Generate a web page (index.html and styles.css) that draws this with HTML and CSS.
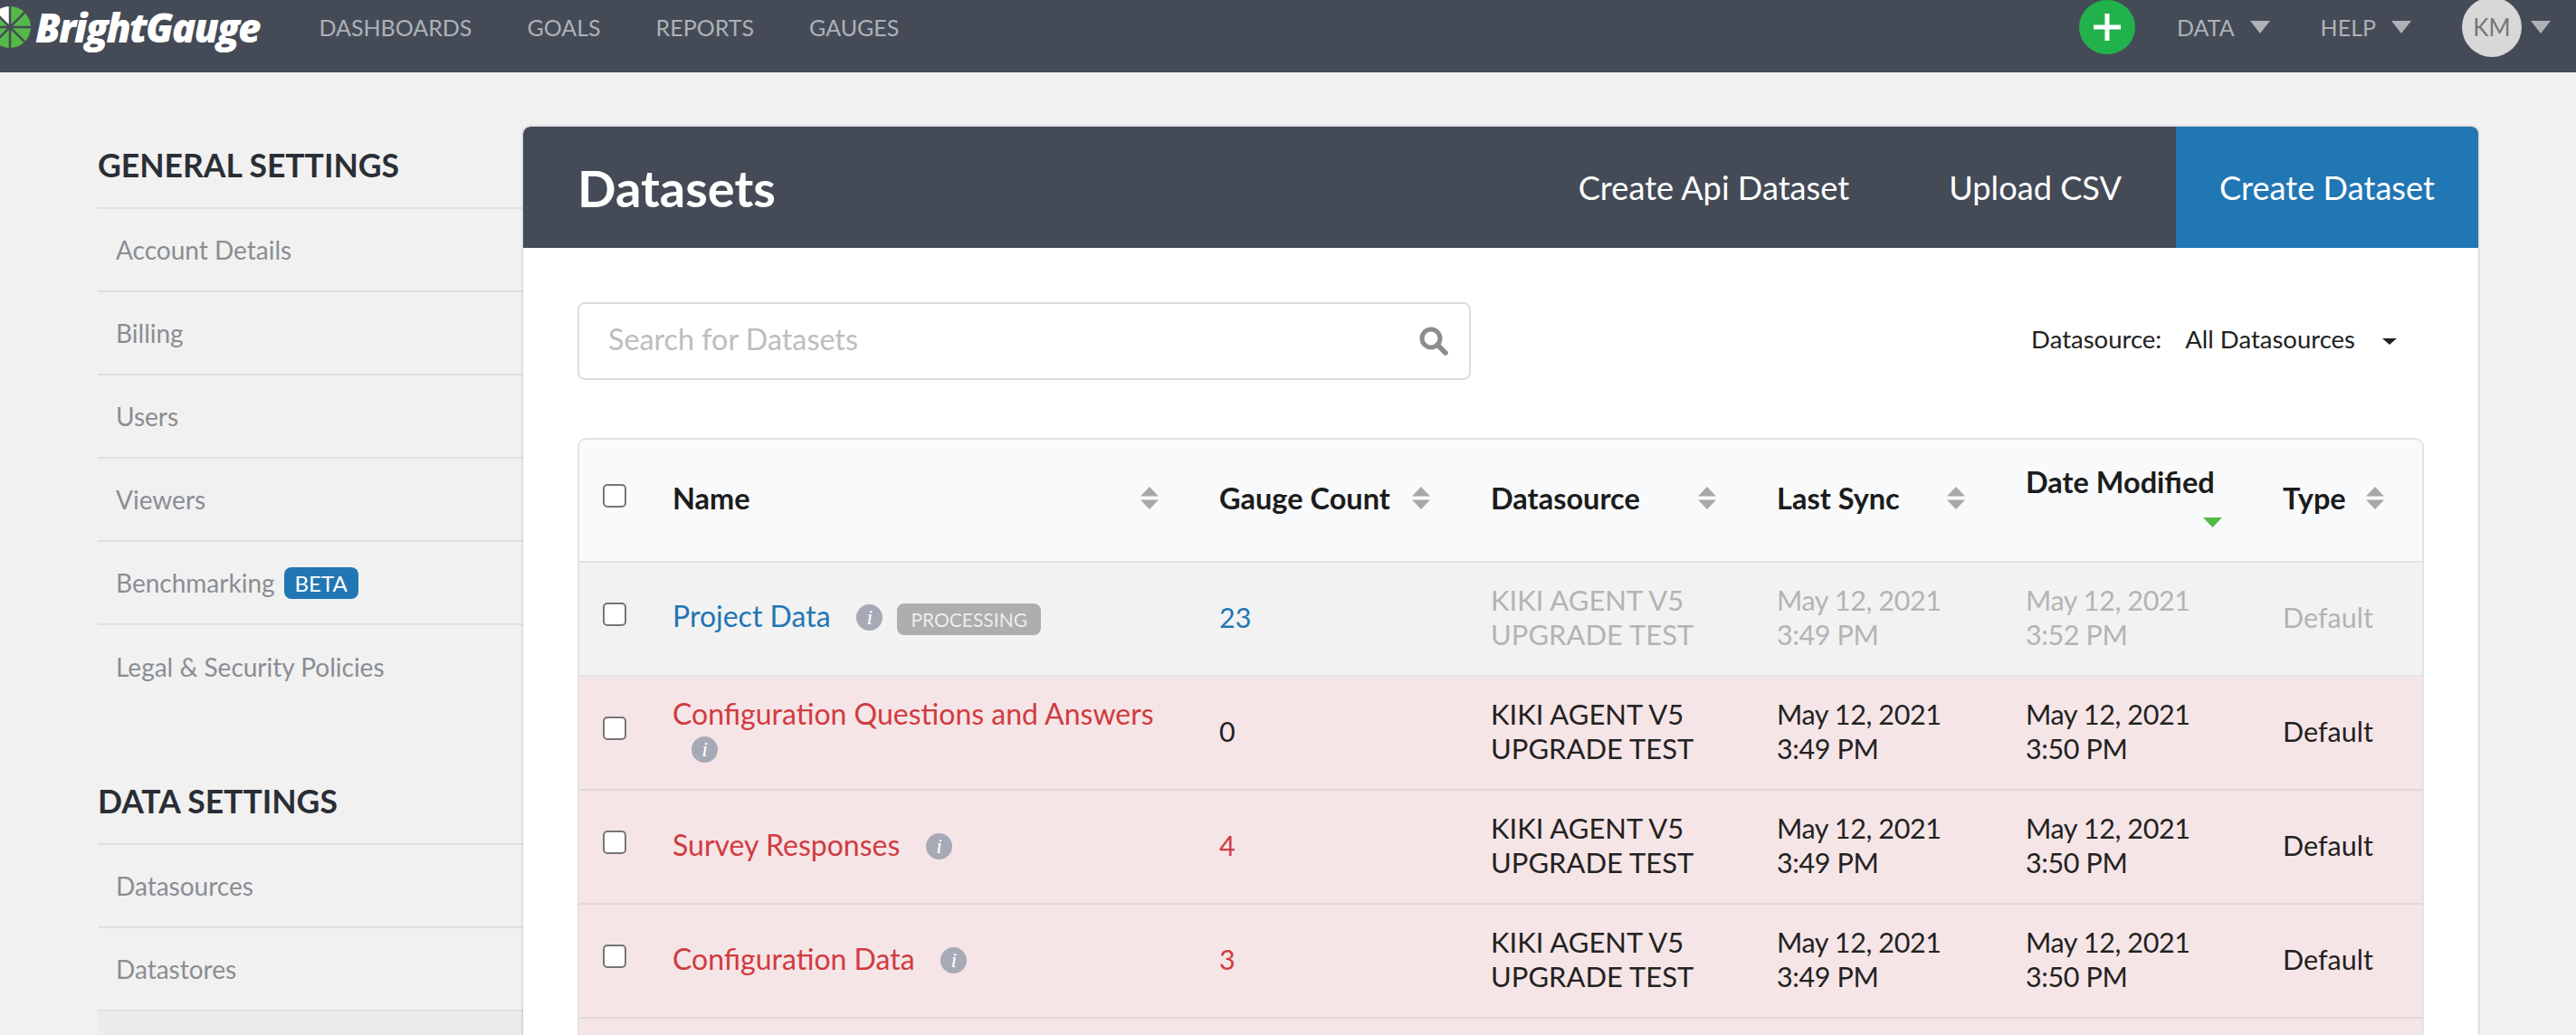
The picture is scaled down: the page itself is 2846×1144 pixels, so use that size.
FILE: index.html
```html
<!DOCTYPE html>
<html lang="en">
<head>
    <meta charset="UTF-8">
    <meta name="viewport" content="width=device-width, initial-scale=1.0">
    <title>Datasets - BrightGauge</title>
    <link rel="stylesheet" href="styles.css">
</head>
<body>
    <header class="topbar">
        <a class="logo">
            <svg class="logo-mark" viewBox="0 0 46 46">
                <circle cx="23" cy="23" r="23" fill="#55b947"/>
                <path d="M23 23 L23 0 A23 23 0 0 0 6.7 6.7 Z" fill="#fff"/>
                <path d="M23 0V46M0 23H46M6.7 6.7L39.3 39.3M39.3 6.7L6.7 39.3" stroke="#444b57" stroke-width="2.5"/>
            </svg>
            <span class="logo-text">BrightGauge</span>
        </a>
        <nav class="main-nav">
            <a>DASHBOARDS</a>
            <a>GOALS</a>
            <a>REPORTS</a>
            <a>GAUGES</a>
        </nav>
        <div class="top-right">
            <span class="add-btn">
                <svg viewBox="0 0 30 30" width="30" height="30"><path d="M15 0V30M0 15H30" stroke="#fff" stroke-width="5"/></svg>
            </span>
            <a class="menu-link">DATA <i class="caret"></i></a>
            <a class="menu-link">HELP <i class="caret"></i></a>
            <span class="user">
                <span class="avatar">KM</span>
                <i class="caret"></i>
            </span>
        </div>
    </header>

    <div class="page">
        <aside class="sidebar">
            <h3 class="side-title">GENERAL SETTINGS</h3>
            <ul class="side-list">
                <li>Account Details</li>
                <li>Billing</li>
                <li>Users</li>
                <li>Viewers</li>
                <li>Benchmarking <span class="beta">BETA</span></li>
                <li>Legal &amp; Security Policies</li>
            </ul>
            <h3 class="side-title">DATA SETTINGS</h3>
            <ul class="side-list">
                <li>Datasources</li>
                <li>Datastores</li>
                <li class="active"></li>
            </ul>
        </aside>

        <main class="card">
            <div class="card-head">
                <h1>Datasets</h1>
                <div class="head-actions">
                    <a class="head-btn">Create Api Dataset</a>
                    <a class="head-btn upload">Upload CSV</a>
                    <a class="head-btn primary">Create Dataset</a>
                </div>
            </div>

            <div class="filters">
                <div class="search">
                    <span class="placeholder">Search for Datasets</span>
                    <svg viewBox="0 0 32 32" width="32" height="32"><circle cx="13" cy="13" r="10" fill="none" stroke="#8c8c8c" stroke-width="5"/><path d="M20 20L29 29" stroke="#8c8c8c" stroke-width="5.5" stroke-linecap="round"/></svg>
                </div>
                <div class="source-filter">
                    <span>Datasource:</span>
                    <span class="source-value">All Datasources</span>
                    <i class="mini-caret"></i>
                </div>
            </div>

            <div class="table-wrap">
                <table class="datasets">
                    <colgroup>
                        <col class="c-check"><col class="c-name"><col class="c-count"><col class="c-source"><col class="c-sync"><col class="c-mod"><col class="c-type">
                    </colgroup>
                    <thead>
                        <tr>
                            <th class="check"><input type="checkbox"></th>
                            <th><div class="th-in">Name <svg class="sort" viewBox="0 0 20 25"><path d="M10 0L20 10.500H0Z M0 14.500H20L10 25Z" fill="#a8a8a8"/></svg></div></th>
                            <th><div class="th-in">Gauge Count <svg class="sort" viewBox="0 0 20 25"><path d="M10 0L20 10.500H0Z M0 14.500H20L10 25Z" fill="#a8a8a8"/></svg></div></th>
                            <th><div class="th-in">Datasource <svg class="sort" viewBox="0 0 20 25"><path d="M10 0L20 10.500H0Z M0 14.500H20L10 25Z" fill="#a8a8a8"/></svg></div></th>
                            <th><div class="th-in">Last Sync <svg class="sort" viewBox="0 0 20 25"><path d="M10 0L20 10.500H0Z M0 14.500H20L10 25Z" fill="#a8a8a8"/></svg></div></th>
                            <th><div class="th-in stacked">Date Modified <svg class="sort-down" viewBox="0 0 21 11"><path d="M0 0H21L10.500 11Z" fill="#55b947"/></svg></div></th>
                            <th><div class="th-in type">Type <svg class="sort" viewBox="0 0 20 25"><path d="M10 0L20 10.500H0Z M0 14.500H20L10 25Z" fill="#a8a8a8"/></svg></div></th>
                        </tr>
                    </thead>
                    <tbody>
                        <tr class="processing">
                            <td class="check"><input type="checkbox"></td>
                            <td class="name"><a>Project Data</a> <i class="info">i</i><span class="tag">PROCESSING</span></td>
                            <td><a class="count">23</a></td>
                            <td class="source">KIKI AGENT V5<br>UPGRADE TEST</td>
                            <td class="date">May 12, 2021<br>3:49 PM</td>
                            <td class="date">May 12, 2021<br>3:52 PM</td>
                            <td>Default</td>
                        </tr>
                        <tr class="failed">
                            <td class="check"><input type="checkbox"></td>
                            <td class="name"><a>Configuration Questions and Answers</a> <i class="info">i</i></td>
                            <td>0</td>
                            <td class="source">KIKI AGENT V5<br>UPGRADE TEST</td>
                            <td class="date">May 12, 2021<br>3:49 PM</td>
                            <td class="date">May 12, 2021<br>3:50 PM</td>
                            <td>Default</td>
                        </tr>
                        <tr class="failed">
                            <td class="check"><input type="checkbox"></td>
                            <td class="name"><a>Survey Responses</a> <i class="info">i</i></td>
                            <td><a class="count">4</a></td>
                            <td class="source">KIKI AGENT V5<br>UPGRADE TEST</td>
                            <td class="date">May 12, 2021<br>3:49 PM</td>
                            <td class="date">May 12, 2021<br>3:50 PM</td>
                            <td>Default</td>
                        </tr>
                        <tr class="failed">
                            <td class="check"><input type="checkbox"></td>
                            <td class="name"><a>Configuration Data</a> <i class="info">i</i></td>
                            <td><a class="count">3</a></td>
                            <td class="source">KIKI AGENT V5<br>UPGRADE TEST</td>
                            <td class="date">May 12, 2021<br>3:49 PM</td>
                            <td class="date">May 12, 2021<br>3:50 PM</td>
                            <td>Default</td>
                        </tr>
                        <tr class="failed">
                            <td colspan="7"></td>
                        </tr>
                    </tbody>
                </table>
            </div>
        </main>
    </div>
</body>
</html>
```

FILE: styles.css
```css
* {
    box-sizing: border-box;
}

html, body {
    height: 1144px;
    margin: 0;
    padding: 0;
    overflow: hidden;
}

body {
    font-family: 'Lato', sans-serif;
    background-color: #f1f1f1;
    color: #222;
}

/* top bar */
.topbar {
    display: flex;
    align-items: center;
    height: 80px;
    padding: 0 28px 20px 0;
    background-color: #444b57;
    overflow: hidden;
}

.logo {
    display: flex;
    align-items: center;
}

.logo-mark {
    width: 46px;
    height: 46px;
    margin-left: -12px;
    flex-shrink: 0;
}

.logo-text {
    margin-left: 5px;
    font-family: 'Open Sans', sans-serif;
    font-size: 44px;
    font-weight: 800;
    font-style: italic;
    letter-spacing: -2px;
    color: #fff;
}

.main-nav {
    display: flex;
    gap: 61px;
    margin-left: 66px;
}

.main-nav a,
.menu-link {
    font-size: 25px;
    color: #aeb1b6;
}

.top-right {
    display: flex;
    align-items: center;
    margin-left: auto;
}

.add-btn {
    display: flex;
    align-items: center;
    justify-content: center;
    width: 62px;
    height: 60px;
    margin-right: 46px;
    border-radius: 50%;
    background-color: #22b24c;
}

.menu-link {
    display: flex;
    align-items: center;
    gap: 17px;
    margin-right: 56px;
}

.caret {
    display: block;
    width: 0;
    height: 0;
    border-left: 11px solid transparent;
    border-right: 11px solid transparent;
    border-top: 14px solid #aeb1b6;
}

.user {
    display: flex;
    align-items: center;
    gap: 10px;
}

.avatar {
    display: flex;
    align-items: center;
    justify-content: center;
    width: 66px;
    height: 66px;
    border-radius: 50%;
    background-color: #d8d8d8;
    color: #777;
    font-size: 26px;
}

/* layout */
.page {
    display: flex;
    height: 1064px;
    padding: 60px 0 0 108px;
    overflow: hidden;
}

.sidebar {
    width: 470px;
    flex-shrink: 0;
}

.side-title {
    display: flex;
    align-items: center;
    height: 91px;
    margin: 0;
    padding-bottom: 5px;
    border-bottom: 2px solid #e0e0e0;
    font-size: 35.500px;
    font-weight: 700;
    color: #2a2e35;
}

.side-list {
    margin: 0 0 60px;
    padding: 0;
    list-style: none;
}

.side-list li {
    display: flex;
    align-items: center;
    height: 92px;
    padding-left: 20px;
    border-bottom: 2px solid #e0e0e0;
    font-size: 28px;
    color: #8a8d93;
}

.side-list li:last-child {
    border-bottom: none;
}

.side-list li.active {
    background-color: #ebebeb;
}

.beta {
    margin-left: 10px;
    padding: 3px 12px;
    border-radius: 8px;
    background-color: #2176b4;
    color: #fff;
    font-size: 24px;
}

/* card */
.card {
    width: 2160px;
    height: 1004px;
    flex-shrink: 0;
    background-color: #fff;
    border-radius: 8px 8px 0 0;
    box-shadow: 0 0 3px rgba(0, 0, 0, 0.3);
    overflow: hidden;
}

.card-head {
    display: flex;
    align-items: stretch;
    justify-content: space-between;
    height: 134px;
    padding-left: 60px;
    border-radius: 8px 8px 0 0;
    background-color: #444b57;
}

.card-head h1 {
    align-self: center;
    margin: 0;
    font-size: 56px;
    font-weight: 700;
    color: #fff;
}

.head-actions {
    display: flex;
}

.head-btn {
    display: flex;
    align-items: center;
    padding: 0 55px;
    font-size: 36.200px;
    color: #fff;
}

.head-btn.upload {
    padding-right: 60px;
}

.head-btn.primary {
    padding: 0 48px;
    background-color: #2176b4;
    border-radius: 0 8px 0 0;
}

.filters {
    display: flex;
    align-items: center;
    justify-content: space-between;
    padding: 60px 60px 0 60px;
}

.search {
    display: flex;
    align-items: center;
    justify-content: space-between;
    width: 987px;
    height: 86px;
    padding: 0 23px 0 32px;
    border: 2px solid #ddd;
    border-radius: 8px;
    background-color: #fff;
}

.placeholder {
    margin-bottom: 5px;
    font-size: 32.300px;
    color: #bdbdbd;
}

.source-filter {
    display: flex;
    align-items: center;
    margin-right: 30px;
    padding-bottom: 6px;
    font-size: 27.500px;
    color: #222;
}

.source-value {
    margin-left: 26px;
}

.mini-caret {
    display: block;
    width: 0;
    height: 0;
    margin-left: 30px;
    margin-top: 6px;
    border-left: 8px solid transparent;
    border-right: 8px solid transparent;
    border-top: 7px solid #222;
}

/* table */
.table-wrap {
    margin: 64px 0 0 60px;
    width: 2040px;
    border: 2px solid #e2e2e2;
    border-radius: 10px;
    overflow: hidden;
}

.datasets {
    width: 2036px;
    table-layout: fixed;
    border-collapse: separate;
    border-spacing: 0;
}

.c-check { width: 73px; }
.c-name { width: 604px; }
.c-count { width: 300px; }
.c-source { width: 316px; }
.c-sync { width: 275px; }
.c-mod { width: 284px; }
.c-type { width: 184px; }

.datasets th {
    height: 136px;
    padding: 0;
    border-bottom: 2px solid #e4e4e4;
    background-color: #f9fafb;
    font-size: 32.500px;
    font-weight: 700;
    text-align: left;
    color: #1c1c1c;
}

.th-in {
    display: flex;
    align-items: center;
    justify-content: space-between;
    padding: 0 37px 6px 30px;
}

.th-in.type {
    padding-right: 42px;
}

.th-in.stacked {
    flex-direction: column;
    align-items: flex-start;
    gap: 20px;
    padding-bottom: 10px;
}

.sort {
    width: 20px;
    height: 25px;
    flex-shrink: 0;
}

.sort-down {
    width: 21px;
    height: 11px;
    align-self: flex-end;
}

.datasets td {
    height: 126px;
    padding: 0 30px 4px;
    border-bottom: 2px solid #e4e4e4;
    font-size: 30.500px;
    line-height: 38px;
}

.datasets td.source {
    font-size: 31px;
}

.datasets td.date {
    letter-spacing: -0.400px;
}

.datasets td.name a {
    font-size: 32px;
}

.datasets th.check,
.datasets td.check {
    padding: 0 0 0 26px;
}

.check input {
    appearance: none;
    display: block;
    width: 26px;
    height: 26px;
    margin: 0 0 10px;
    border: 2px solid #767676;
    border-radius: 5px;
    background-color: #fff;
}

.processing td {
    background-color: #f2f2f2;
    color: #b4b4b4;
}

.processing td.name a,
.processing td a.count {
    color: #2176b4;
}

.failed td {
    background-color: #f6e5e7;
    border-bottom-color: #e3d5d7;
}

.failed td.name a,
.failed td a.count {
    color: #d13b40;
}

.info {
    display: inline-block;
    width: 29px;
    height: 29px;
    margin-left: 21px;
    border-radius: 50%;
    background-color: #a7aab6;
    color: #fff;
    font-family: 'Liberation Serif', serif;
    font-size: 24px;
    font-style: italic;
    line-height: 29px;
    text-align: center;
    vertical-align: 3px;
}

.tag {
    display: inline-block;
    margin-left: 16px;
    padding: 0 15px;
    height: 35px;
    border-radius: 8px;
    background-color: #aeaeae;
    color: #ededed;
    font-size: 21px;
    line-height: 35px;
    vertical-align: 0;
}
```
